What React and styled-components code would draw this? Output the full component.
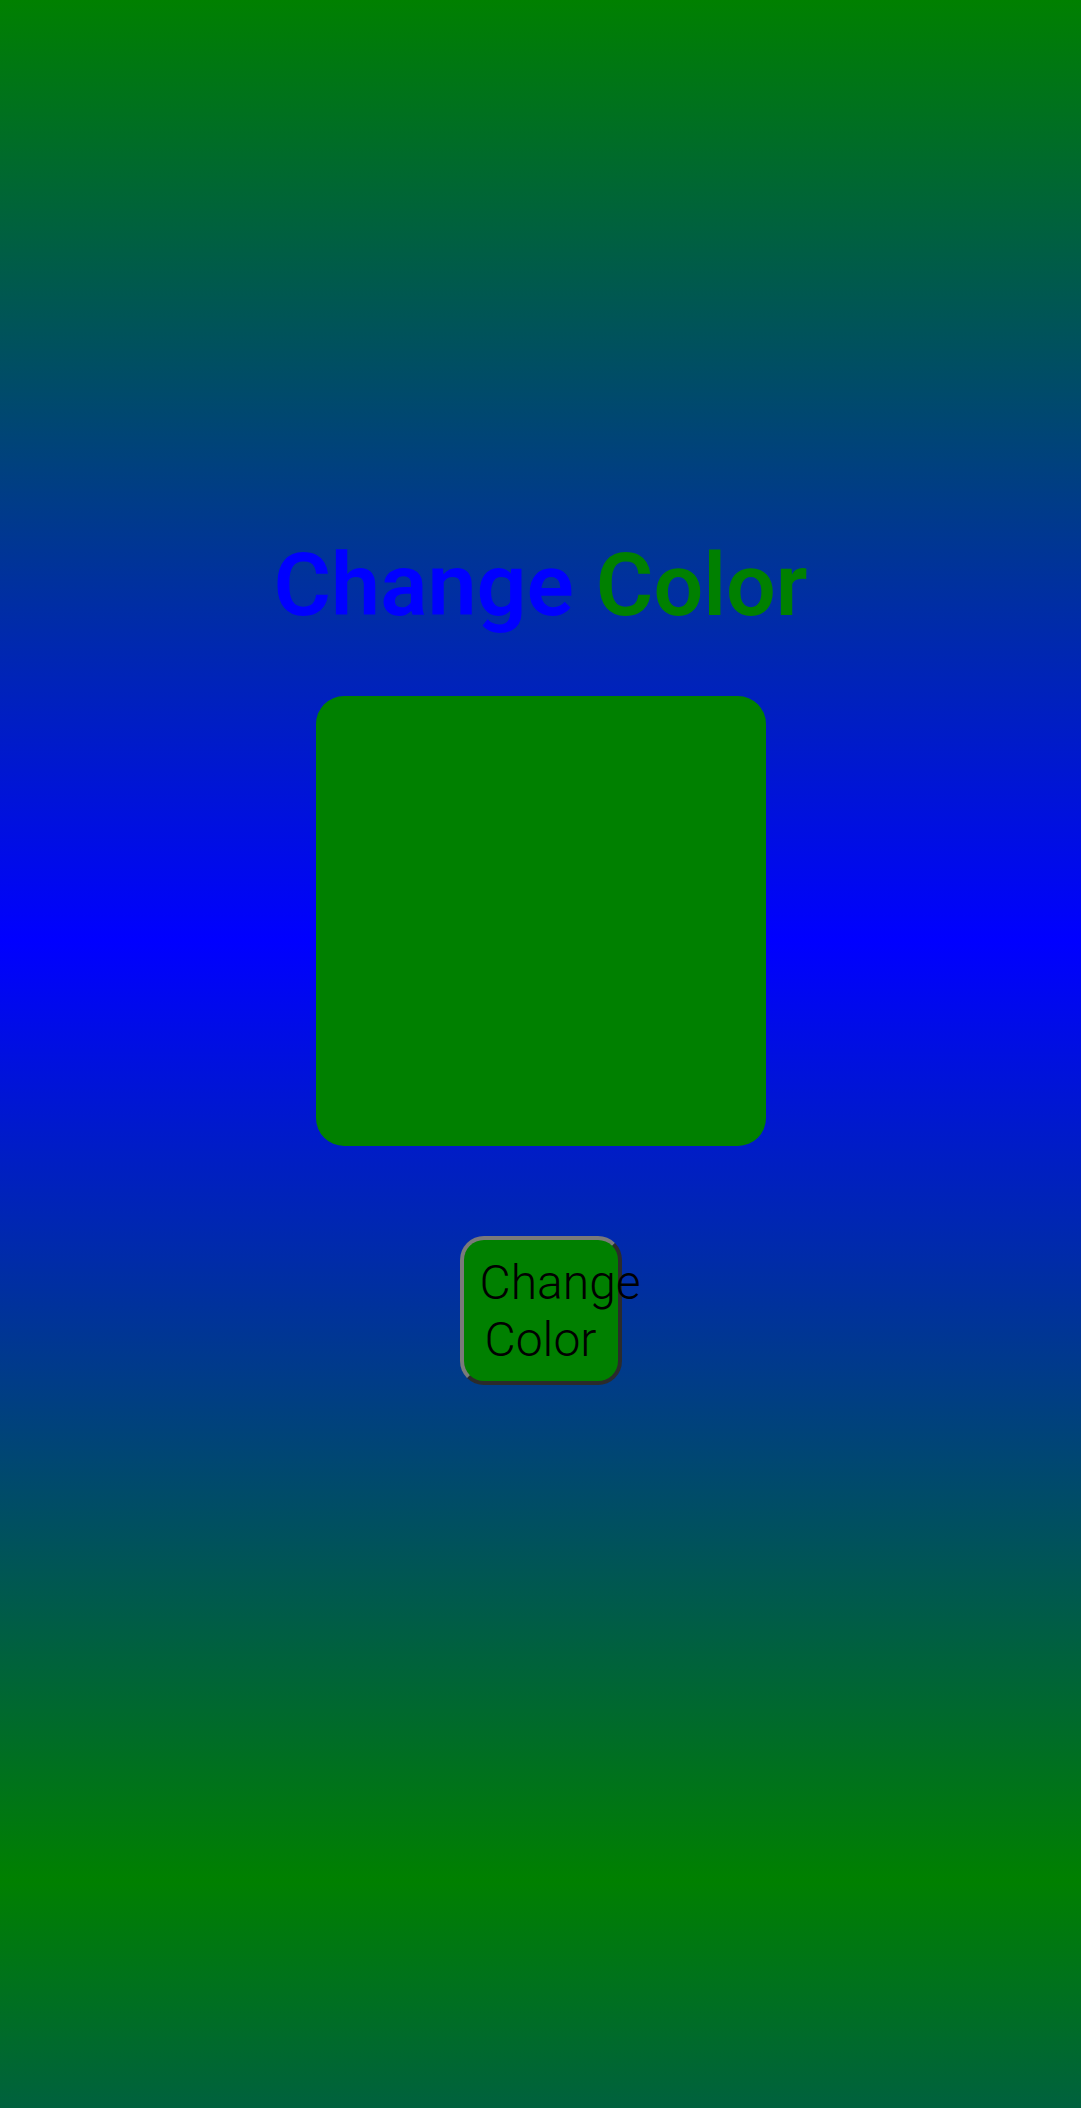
import React, { useState } from 'react';
import styled, { createGlobalStyle } from 'styled-components';

const GlobalStyle = createGlobalStyle`
  html {
    background: linear-gradient(#008000, #0000ff, #008000);
    background-size: 100% 1880px;
    background-repeat: repeat-y;
  }
  body {
    margin: 0;
    font-family: Roboto, "Liberation Sans", sans-serif;
  }
`;

const Page = styled.div`
  display: flex;
  flex-direction: column;
  align-items: center;
  padding-top: 533px;
  min-height: 1880px;
  box-sizing: border-box;
`;

const Title = styled.h1`
  margin: 0;
  font-size: 88px;
  font-weight: 600;
  line-height: normal;
`;

const Word = styled.span`
  color: ${(p) => p.$color};
`;

const Swatch = styled.div`
  width: 450px;
  height: 450px;
  margin-top: 60px;
  border-radius: 28px;
  background: ${(p) => p.$color};
`;

const Button = styled.button`
  margin-top: 90px;
  width: 162px;
  height: 149px;
  box-sizing: border-box;
  padding: 0 16px;
  text-align: center;
  font-family: Roboto, "Liberation Sans", sans-serif;
  font-weight: 300;
  font-size: 48px;
  line-height: 57px;
  color: #000;
  background: ${(p) => p.$color};
  border-radius: 24px;
  border-style: solid;
  border-width: 4px;
  border-color: #7a7a7a #2b2b2b #2b2b2b #7a7a7a;
  cursor: pointer;
`;

const colors = ['#008000', '#0000ff'];

const App = () => {
  const [index, setIndex] = useState(0);
  const color = colors[index];

  return (
    <>
      <GlobalStyle />
      <Page>
        <Title>
          <Word $color="#0000ff">Change</Word> <Word $color="#008000">Color</Word>
        </Title>
        <Swatch $color={color} />
        <Button $color={color} onClick={() => setIndex((index + 1) % colors.length)}>
          Change Color
        </Button>
      </Page>
    </>
  );
};

export default App;
